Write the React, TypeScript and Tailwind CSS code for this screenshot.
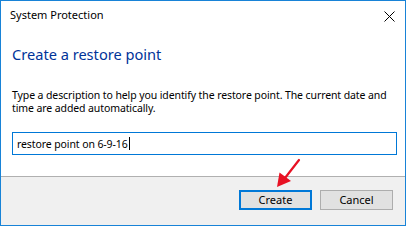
function RedArrow() {
  return (
    <svg className="absolute left-0 top-0 pointer-events-none" width="407" height="227" viewBox="0 0 407 227">
      <line x1="299" y1="160" x2="285" y2="178" stroke="#e81123" strokeWidth="2.2" strokeLinecap="round" />
      <polygon points="277,187 279.5,172.5 291,181" fill="#e81123" />
    </svg>
  );
}

function CloseGlyph() {
  return (
    <svg className="mt-[4px]" width="11" height="11" viewBox="0 0 11 11">
      <path d="M0.5 0.5 L10.5 10.5 M10.5 0.5 L0.5 10.5" stroke="#000" strokeWidth="1" />
    </svg>
  );
}

export default function App() {
  return (
    <div className="relative w-[407px] h-[227px] overflow-hidden">
      <div
        className="flex flex-col w-[406px] h-[226px] border border-[#1883d7] bg-white text-[11px] text-black"
        style={{ fontFamily: '"Noto Sans", "Open Sans", sans-serif' }}
      >
        {/* title bar */}
        <div className="flex items-start justify-between h-[30px] pl-[9px] pr-[10px] pt-[6px]">
          <span className="leading-[16px]">System Protection</span>
          <CloseGlyph />
        </div>

        {/* body */}
        <div className="flex flex-1 flex-col px-[11px]">
          <h1 className="mt-[13px] text-[14.6px] leading-[20px] text-[#003399]">Create a restore point</h1>
          <p className="mt-[25px] whitespace-nowrap text-[10.5px] leading-[13px] tracking-[-0.1px]">
            Type a description to help you identify the restore point. The current date and
            <br />
            time are added automatically.
          </p>
          <div className="mt-[17px] flex h-[23px] w-[385px] items-center border border-[#0078d7] px-[4px]">
            <span className="text-[10.5px] leading-[16px] tracking-[-0.1px]">restore point on 6-9-16</span>
            <span className="ml-[1px] h-[13px] w-px bg-black" />
          </div>
        </div>

        {/* footer */}
        <div className="flex h-[49px] items-start justify-end gap-[8px] border-t border-[#b0b0b0] bg-[#f0f0f0] pr-[12px] pt-[13px]">
          <button className="flex h-[20px] w-[73px] items-center justify-center border-2 border-[#0078d7] bg-[#e1e1e1] leading-[14px]">
            Create
          </button>
          <button className="flex h-[20px] w-[73px] items-center justify-center border border-[#adadad] bg-[#e1e1e1] leading-[14px]">
            Cancel
          </button>
        </div>
      </div>
      <RedArrow />
    </div>
  );
}
